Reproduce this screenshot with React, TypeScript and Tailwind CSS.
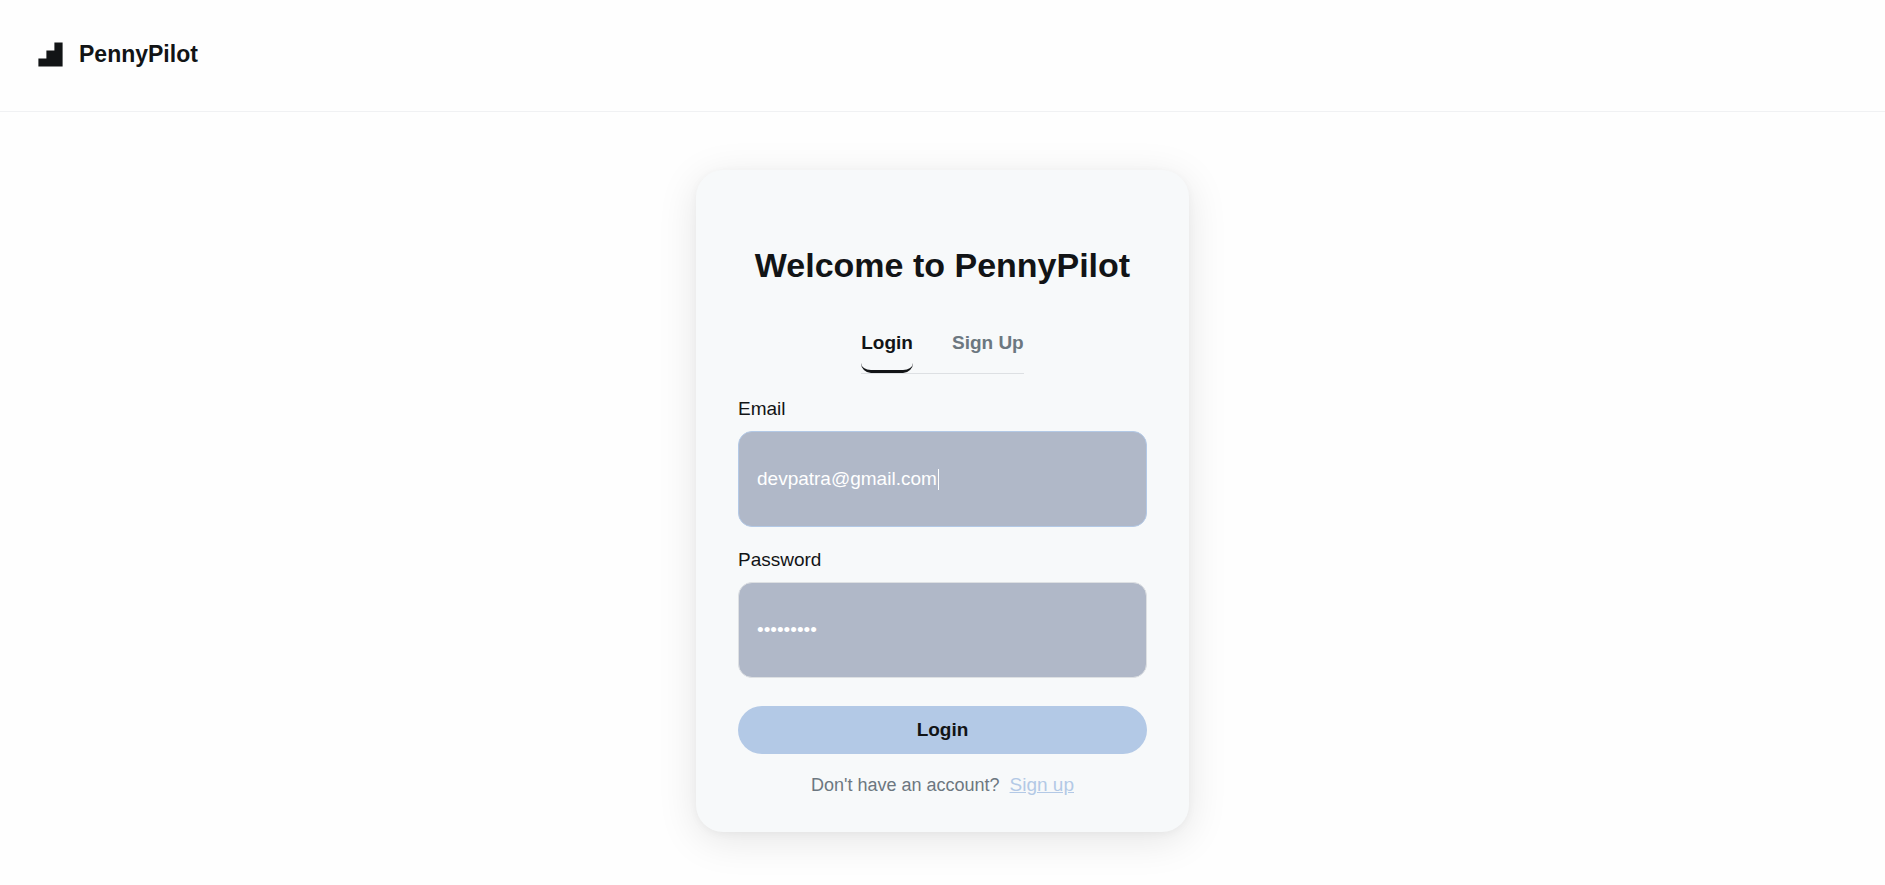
import { useState } from "react";

function Logo() {
  return (
    <svg className="size-[25px]" viewBox="0 0 25 25" aria-hidden="true">
      <path
        d="M16.4 0.4H24.6V24.6H0.4V16.4H8.4V8.4H16.4Z"
        fill="#121416"
      />
    </svg>
  );
}

function Header() {
  return (
    <header className="flex h-28 items-center gap-4 border-b border-[#f0f1f3] px-[38px] pb-[3px]">
      <Logo />
      <span className="text-[23px] leading-7 font-bold">PennyPilot</span>
    </header>
  );
}

export default function App() {
  const [email, setEmail] = useState("devpatra@gmail.com");
  const [password, setPassword] = useState("pilot1234");
  const [touched, setTouched] = useState(false);

  return (
    <div className="min-h-screen bg-[#fefefe] font-['Liberation_Sans',Arial,sans-serif] text-[19px] leading-6 text-[#121416]">
      <Header />
      <main className="flex justify-center px-4 pt-[58px] pb-[53px]">
        <section className="w-full max-w-[493px] rounded-[27px] bg-[#f7f9fa] px-[42px] pt-[75px] pb-[35px] shadow-[0_8px_40px_rgba(0,0,0,0.10),0_2px_8px_rgba(0,0,0,0.04)]">
          <h1 className="text-center text-[34px] leading-10 font-bold">
            Welcome to PennyPilot
          </h1>

          <div className="mt-[46px] flex justify-center">
            <div role="tablist" className="flex gap-[39px] border-b border-[#dde0e3]">
              <button
                type="button"
                role="tab"
                aria-selected="true"
                className="rounded-[10px] border-b-3 border-[#121416] pb-[15px] font-bold"
              >
                Login
              </button>
              <button
                type="button"
                role="tab"
                aria-selected="false"
                className="rounded-[10px] border-b-3 border-transparent pb-[15px] font-bold text-[#6c7780]"
              >
                Sign Up
              </button>
            </div>
          </div>

          <form className="mt-[23px] flex flex-col" onSubmit={(e) => e.preventDefault()}>
            <label htmlFor="email">Email</label>
            <div className="relative mt-[10px] flex items-center">
              <input
                id="email"
                type="email"
                value={email}
                onFocus={() => setTouched(true)}
                onChange={(e) => setEmail(e.target.value)}
                className="h-24 w-full rounded-[14px] border border-[#b3c9e6] bg-[#b0b8c8] px-[18px] text-white caret-white outline-none"
              />
              {!touched && (
                <span
                  aria-hidden="true"
                  className="pointer-events-none absolute left-[200px] h-[21px] w-px bg-white"
                />
              )}
            </div>
            <label htmlFor="password" className="mt-[21px]">
              Password
            </label>
            <input
              id="password"
              type="password"
              value={password}
              onChange={(e) => setPassword(e.target.value)}
              className="mt-[10px] h-24 rounded-[14px] border border-[#dde0e3] bg-[#b0b8c8] px-[18px] text-white caret-white outline-none focus:border-[#b3c9e6]"
            />
            <button
              type="submit"
              className="mt-7 h-12 rounded-full bg-[#b3c9e6] font-bold"
            >
              Login
            </button>
          </form>

          <p className="mt-[19px] flex justify-center gap-[10px] text-[18px] text-[#6c7780]">
            Don't have an account?
            <a href="#signup" className="text-[19px] text-[#b3c9e6] underline">
              Sign up
            </a>
          </p>
        </section>
      </main>
    </div>
  );
}
